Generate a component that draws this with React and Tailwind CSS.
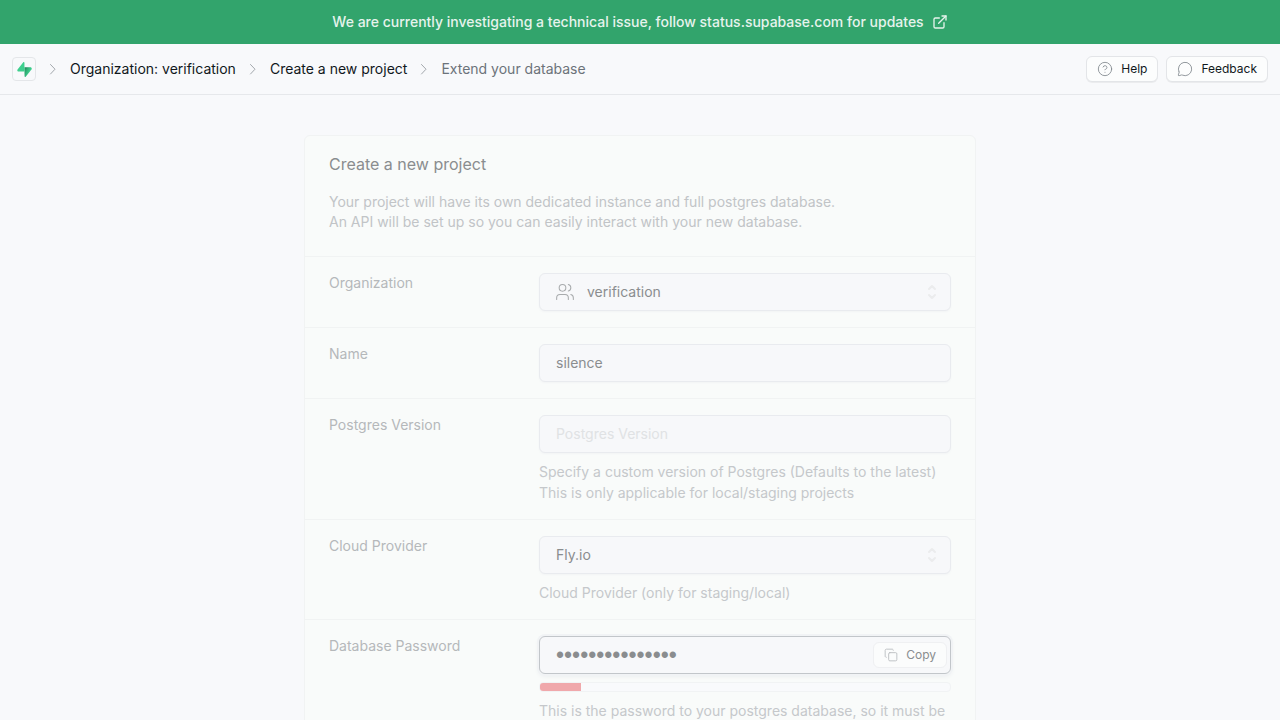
import React from 'react';
import { ExternalLink, HelpCircle, MessageCircle, Users, Copy } from 'lucide-react';

function Chevron() {
  return (
    <svg className="mx-[9px] size-4 shrink-0 text-[#a3a8ad]" viewBox="0 0 16 16" fill="none" stroke="currentColor" strokeWidth="1" strokeLinecap="round" strokeLinejoin="round" aria-hidden="true">
      <path d="M5.5 3.5 L10 8.2 L5.5 13" />
    </svg>
  );
}

function Logo() {
  return (
    <svg className="size-[15px]" viewBox="0 0 109 113" fill="none" aria-hidden="true">
      <defs>
        <linearGradient id="bolt" x1="53.9738" y1="54.974" x2="94.1635" y2="71.8295" gradientUnits="userSpaceOnUse">
          <stop stopColor="#249361" />
          <stop offset="1" stopColor="#3ECF8E" />
        </linearGradient>
        <linearGradient id="shade" x1="36.1558" y1="30.578" x2="54.4844" y2="65.0806" gradientUnits="userSpaceOnUse">
          <stop />
          <stop offset="1" stopOpacity="0" />
        </linearGradient>
      </defs>
      <path d="M63.7076 110.284C60.8481 113.885 55.0502 111.912 54.9813 107.314L53.9738 40.0627L99.1935 40.0627C107.384 40.0627 111.952 49.5228 106.859 55.9374L63.7076 110.284Z" fill="url(#bolt)" />
      <path d="M63.7076 110.284C60.8481 113.885 55.0502 111.912 54.9813 107.314L53.9738 40.0627L99.1935 40.0627C107.384 40.0627 111.952 49.5228 106.859 55.9374L63.7076 110.284Z" fill="url(#shade)" fillOpacity="0.2" />
      <path d="M45.317 2.07103C48.1765 -1.53037 53.9745 0.442937 54.0434 5.041L54.4849 72.2922H9.83113C1.64038 72.2922 -2.92775 62.8321 2.1655 56.4175L45.317 2.07103Z" fill="#3ECF8E" />
    </svg>
  );
}

function UpDown() {
  return (
    <span className="pointer-events-none absolute inset-y-0 right-2 flex items-center">
      <svg className="size-5 text-[#ebeced]" viewBox="0 0 20 20" fill="none" stroke="currentColor" strokeWidth="2" strokeLinecap="round" strokeLinejoin="round" aria-hidden="true">
        <path d="M6 7 L9 4 L12 7 M6 13 L9 16 L12 13" />
      </svg>
    </span>
  );
}

const control =
  'block h-[38px] w-full appearance-none rounded-md border bg-[#f7f8fa] px-4 outline-none placeholder:text-[#e0e2e4]';
const quiet = 'border-[#e9ebef] text-sm text-[#8a8d8f] shadow-[0_1px_2px_#f2f4f5]';

function Field({ id, label, children }) {
  return (
    <div className="grid grid-cols-12 gap-x-2 border-t border-[#f1f3f3] px-6 py-4">
      <label htmlFor={id} className="col-span-4 text-sm text-[#b5b8ba]">{label}</label>
      <div className="col-span-8 flex flex-col gap-2">{children}</div>
    </div>
  );
}

function Hint({ children }) {
  return <p className="text-sm leading-[21px] text-[#c5c8cb]">{children}</p>;
}

function HeaderButton({ icon: Icon, children }) {
  return (
    <button type="button" className="flex h-[26px] items-center gap-2 rounded-md border border-[#e3e5e8] bg-[#fcfdfd] px-2.5 text-xs text-[#11181c] shadow-2xs">
      <Icon className="size-4 text-[#7e868c]" strokeWidth={1.25} />
      {children}
    </button>
  );
}

export default function App() {
  return (
    <div className="flex h-screen flex-col bg-[#f8f9fb] font-['Inter','Liberation_Sans',sans-serif]">
      <a href="https://status.supabase.com" className="flex h-11 shrink-0 items-center justify-center gap-2 bg-[#32a46c] text-sm font-medium text-[#e6f3ec]">
        We are currently investigating a technical issue, follow status.supabase.com for updates
        <ExternalLink className="size-4" strokeWidth={2} />
      </a>

      <header className="flex shrink-0 items-center justify-between border-b border-[#e6e8eb] px-3 py-3">
        <nav aria-label="Breadcrumb" className="flex items-center text-sm text-[#11181c]">
          <a href="#home" aria-label="Supabase" className="flex size-6 items-center justify-center rounded border border-[#e4e6e9]">
            <Logo />
          </a>
          <Chevron />
          <a href="#organization">Organization: verification</a>
          <Chevron />
          <a href="#new">Create a new project</a>
          <Chevron />
          <span className="text-[#6c737a]">Extend your database</span>
        </nav>
        <div className="flex items-center gap-2">
          <HeaderButton icon={HelpCircle}>Help</HeaderButton>
          <HeaderButton icon={MessageCircle}>Feedback</HeaderButton>
        </div>
      </header>

      <main className="min-h-0 flex-1 overflow-y-auto pt-10 [scrollbar-width:none]">
        <form className="mx-auto w-full max-w-2xl overflow-hidden rounded-md border border-[#f1f3f3] bg-[#f9fbfa]">
          <div className="px-6 pt-4 pb-6">
            <h1 className="text-base text-[#8a8d8f]">Create a new project</h1>
            <p className="mt-4 text-sm text-[#c1c4c7]">
              Your project will have its own dedicated instance and full postgres database.
              <br />
              An API will be set up so you can easily interact with your new database.
            </p>
          </div>

          <Field id="organization" label="Organization">
            <div className="relative">
              <select id="organization" className={`${control} ${quiet} pl-[47px]`}>
                <option>verification</option>
              </select>
              <Users className="pointer-events-none absolute top-[9px] left-4 size-5 text-[#a8abad]" strokeWidth={1.25} />
              <UpDown />
            </div>
          </Field>

          <Field id="name" label="Name">
            <input id="name" type="text" defaultValue="silence" className={`${control} ${quiet} pb-0.5`} />
          </Field>

          <Field id="version" label="Postgres Version">
            <input id="version" type="text" placeholder="Postgres Version" className={`${control} ${quiet} pb-0.5`} />
            <Hint>
              Specify a custom version of Postgres (Defaults to the latest)
              <br />
              This is only applicable for local/staging projects
            </Hint>
          </Field>

          <Field id="provider" label="Cloud Provider">
            <div className="relative">
              <select id="provider" className={`${control} ${quiet}`}>
                <option>Fly.io</option>
              </select>
              <UpDown />
            </div>
            <Hint>Cloud Provider (only for staging/local)</Hint>
          </Field>

          <Field id="password" label="Database Password">
            <div className="relative">
              <input id="password" type="password" defaultValue="silence-project" className={`${control} border-[#c2c6ca] pr-20 font-['Liberation_Sans',sans-serif] text-[23px] text-[#8a8d8f] shadow-[0_0_0_2px_#f1f3f5,0_2px_5px_#e8eaed]`} />
              <button type="button" className="absolute top-1.5 right-1 flex h-[26px] items-center gap-2 rounded-md border border-[#eff0f2] bg-[#fbfcfc] px-2.5 text-xs text-[#8a8d8f]">
                <Copy className="size-3.5 text-[#b9bcbf]" strokeWidth={1.5} />
                Copy
              </button>
            </div>
            <div role="progressbar" aria-label="Password strength" aria-valuenow={10} aria-valuemin={0} aria-valuemax={100} className="h-2.5 overflow-hidden rounded border border-[#f1f3f4] bg-[#f9fafc]">
              <div className="h-full w-1/10 bg-[#f0a8ab]" />
            </div>
            <Hint>This is the password to your postgres database, so it must be</Hint>
          </Field>
        </form>
      </main>
    </div>
  );
}
